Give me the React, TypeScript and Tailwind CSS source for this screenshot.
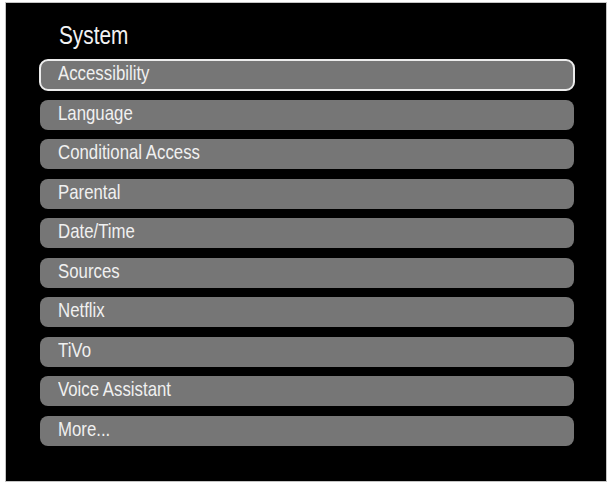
import React from "react";

const items = [
  "Accessibility",
  "Language",
  "Conditional Access",
  "Parental",
  "Date/Time",
  "Sources",
  "Netflix",
  "TiVo",
  "Voice Assistant",
  "More...",
];

export default function App() {
  return (
    <div
      className="w-[609px] h-[484px] bg-white pt-[2px] pl-[5px]"
      style={{ fontFamily: '"Liberation Sans", Arial, sans-serif' }}
    >
      <div className="w-[602px] h-[480px] border border-[#c4c4c4] bg-black pl-[34px] pr-[32px] pt-[17px]">
        <div className="pl-[19px] text-[26px] leading-[30px] text-[#f2f2f2]">
          <span className="inline-block origin-left scale-x-[0.8]">System</span>
        </div>
        <div className="mt-[10px] flex flex-col gap-[9.5px]">
          {items.map((t, i) => (
            <div
              key={t}
              className={
                "h-[30px] rounded-[8px] bg-[#767676] pl-[18px] text-[21px] leading-[25px] text-[#f0f0f0] whitespace-nowrap " +
                (i === 0 ? "outline-2 outline-[#ececec] outline-offset-[-1px] outline" : "")
              }
            >
              <span className="inline-block origin-left scale-x-[0.8]">{t}</span>
            </div>
          ))}
        </div>
      </div>
    </div>
  );
}
